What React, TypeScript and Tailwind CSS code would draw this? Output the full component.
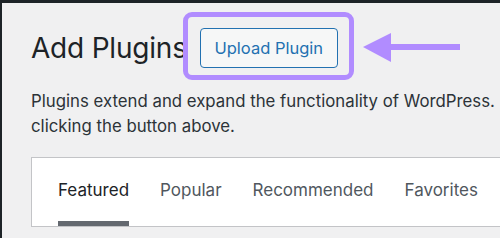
import React from "react";

export default function App() {
  const font = { fontFamily: "Inter, 'Noto Sans', sans-serif" };
  return (
    <div
      className="relative w-[500px] h-[238px] overflow-hidden bg-[#f0f0f1] border-t-[3px] border-l-2 border-[#1d2327]"
      style={font}
    >
      <div className="pl-[29px] pt-[25px]">
        <div className="flex items-center h-[40px] whitespace-nowrap">
          <h1 className="text-[28px] leading-[40px] font-normal text-[#1d2327] tracking-[-0.2px]">
            Add Plugins
          </h1>
          <button className="ml-[13px] h-[40px] w-[138px] rounded-[4px] border border-[#2271b1] bg-[#f6f7f7] text-[#2271b1] text-[16.5px] leading-[38px]">
            Upload Plugin
          </button>
        </div>
        <p className="mt-[21px] text-[16.8px] leading-[25px] text-[#2c3338] whitespace-nowrap">
          Plugins extend and expand the functionality of WordPress.
          <br />
          clicking the button above.
        </p>
        <div className="mt-[18px] w-[520px] h-[70px] border border-[#c3c4c7] bg-white">
          <ul className="flex h-full pl-[26px] gap-[31px] text-[17px] leading-[24px] whitespace-nowrap">
            <li className="flex h-full flex-col pt-[20px] border-b-[5px] border-[#646970] text-[#1d2327]">
              Featured
            </li>
            <li className="flex h-full flex-col pt-[20px] text-[#50575e]">Popular</li>
            <li className="flex h-full flex-col pt-[20px] text-[#50575e]">Recommended</li>
            <li className="flex h-full flex-col pt-[20px] text-[#50575e]">Favorites</li>
          </ul>
        </div>
      </div>

      {/* annotation highlight */}
      <div className="absolute left-[181px] top-[9px] w-[171px] h-[68px] rounded-[9px] border-[5px] border-[#b18cff]" />
      {/* annotation arrow */}
      <svg
        className="absolute left-[361px] top-[29px]"
        width="100"
        height="34"
        viewBox="0 0 100 34"
      >
        <polygon points="0,15 28,1 28,30" fill="#b18cff" />
        <rect x="26" y="12" width="71" height="6" fill="#b18cff" />
      </svg>
    </div>
  );
}
